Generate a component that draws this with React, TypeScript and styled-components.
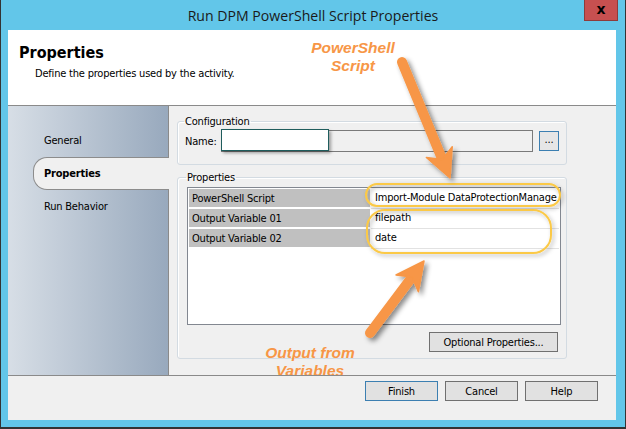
import React from "react";
import styled, { createGlobalStyle } from "styled-components";

const UI = `"DejaVu Sans Condensed", "DejaVu Sans", sans-serif`;
const ORANGE = "#f79646";

const Global = createGlobalStyle`
  html, body { margin: 0; padding: 0; background: #ffffff; }
  * { box-sizing: border-box; }
`;

const Window = styled.div`
  width: 626px;
  height: 429px;
  background: #62c6e9;
  border-left: 1px solid #333;
  border-right: 1px solid #333;
  border-bottom: 2px solid #333;
  display: flex;
  flex-direction: column;
  font-family: ${UI};
  font-size: 11px;
  letter-spacing: -0.2px;
  color: #000;
`;

const TitleBar = styled.div`
  height: 30px;
  flex: none;
  display: grid;
  grid-template-columns: 1fr auto 1fr;
  align-items: center;
`;

const Title = styled.div`
  grid-column: 2;
  font-family: "Open Sans", "Noto Sans", sans-serif;
  font-size: 14.1px;
  letter-spacing: 0;
  color: #1a1a1a;
  white-space: nowrap;
`;

const CloseButton = styled.div`
  grid-column: 3;
  justify-self: end;
  align-self: start;
  margin-right: 7px;
  width: 34px;
  height: 21px;
  background: #c75050;
  border: 1px solid #8e3b3b;
  border-top: none;
  display: flex;
  align-items: center;
  justify-content: center;
  font-family: "DejaVu Sans", sans-serif;
  font-weight: bold;
  font-size: 14px;
  letter-spacing: 0;
  color: #000;
  line-height: 1;
  padding-bottom: 2px;
`;

const Client = styled.div`
  position: relative;
  flex: 1;
  margin: 0 9px 7px 7px;
  display: flex;
  flex-direction: column;
  background: #f0f0f0;
  overflow: hidden;
`;

const Header = styled.div`
  height: 76px;
  flex: none;
  background: #fff;
  border-bottom: 1px solid #8a8a8a;
  padding: 13px 0 0 11px;
`;

const Heading = styled.div`
  font-weight: bold;
  font-size: 16px;
  letter-spacing: 0;
  line-height: 20px;
`;

const SubHeading = styled.div`
  margin: 4px 0 0 16px;
  line-height: 14px;
`;

const Body = styled.div`
  flex: 1;
  display: flex;
  min-height: 0;
`;

const Sidebar = styled.div`
  width: 161px;
  flex: none;
  background: linear-gradient(to right, #d7dee6, #98a9bd);
  border-right: 1px solid #8a8a8a;
  padding-top: 18px;
  display: flex;
  flex-direction: column;
`;

const Tab = styled.div<{ $active?: boolean }>`
  height: 33px;
  margin-left: 25px;
  margin-right: -1px;
  padding-left: 10px;
  display: flex;
  align-items: center;
  font-weight: ${(p) => (p.$active ? "bold" : "normal")};
  background: ${(p) => (p.$active ? "#f0f0f0" : "transparent")};
  border: 1px solid ${(p) => (p.$active ? "#8c8c8c" : "transparent")};
  border-right: none;
  border-radius: 14px 0 0 14px;
`;

const Panel = styled.div`
  flex: 1;
  padding: 9px 0 0 8px;
  display: flex;
  flex-direction: column;
  gap: 6px;
`;

const Group = styled.fieldset<{ $pl: number; $pr: number; $pb: number }>`
  width: 390px;
  margin: 0;
  padding: 0 ${(p) => p.$pr}px ${(p) => p.$pb}px ${(p) => p.$pl}px;
  border: 1px solid #d3dbe2;
  border-radius: 3px;
  box-shadow: inset 1px 1px 0 #fff;
`;

const Legend = styled.legend`
  padding: 0 1px;
  line-height: 13px;
  margin-left: -1px;
`;

const NameRow = styled.div`
  display: flex;
  align-items: center;
  margin-top: 2px;
`;

const NameLabel = styled.div`
  width: 36px;
`;

const FieldWrap = styled.div`
  position: relative;
  width: 312px;
  height: 22px;
`;

const Field = styled.div`
  width: 100%;
  height: 100%;
  border: 1px solid #7a7a7a;
  background: #f0f0f0;
`;

const FieldHighlight = styled.div`
  position: absolute;
  left: 0;
  top: -1px;
  width: 108px;
  height: 22px;
  background: #fff;
  border: 1px solid #1f5d5d;
  box-shadow: 2px 2px 3px rgba(0, 0, 0, 0.35);
`;

const DotsButton = styled.div`
  width: 20px;
  height: 20px;
  margin-left: 6px;
  border: 1px solid #3c7fb1;
  background: #e6e6e6;
  display: flex;
  align-items: center;
  justify-content: center;
  padding-bottom: 3px;
`;

const Grid = styled.div`
  margin-top: 3px;
  width: 374px;
  height: 138px;
  border: 1px solid #828790;
  background: #fff;
  padding: 1px;
  display: flex;
  flex-direction: column;
`;

const Row = styled.div`
  display: grid;
  grid-template-columns: 182px 1fr;
  height: 20px;
`;

const KeyCell = styled.div`
  background: #c0c0c0;
  height: 18px;
  padding-left: 3px;
  display: flex;
  align-items: center;
  margin-right: 1px;
`;

const ValueCell = styled.div`
  height: 20px;
  padding: 0 0 2px 4px;
  border-bottom: 1px solid #e2e2e2;
  display: flex;
  align-items: center;
  white-space: nowrap;
  overflow: hidden;
`;

const ButtonRow = styled.div<{ $mt: number; $mr: number }>`
  display: flex;
  justify-content: flex-end;
  gap: 7px;
  margin-top: ${(p) => p.$mt}px;
  margin-right: ${(p) => p.$mr}px;
`;

const Button = styled.div<{ $w: number; $default?: boolean }>`
  width: ${(p) => p.$w}px;
  height: 20px;
  border: 1px solid ${(p) => (p.$default ? "#3c7fb1" : "#707070")};
  background: #e1e1e1;
  display: flex;
  align-items: center;
  justify-content: center;
  white-space: nowrap;
`;

const Footer = styled.div`
  position: relative;
  z-index: 2;
  height: 45px;
  flex: none;
  background: #f0f0f0;
  border-top: 1px solid #8a8a8a;
  padding: 5px 18px 0 0;
`;

const Overlay = styled.div`
  position: absolute;
  inset: 0;
  z-index: 1;
  pointer-events: none;
`;

const Note = styled.div<{ $x: number; $y: number }>`
  position: absolute;
  left: ${(p) => p.$x}px;
  top: ${(p) => p.$y}px;
  width: 140px;
  text-align: center;
  font-family: "Liberation Sans", Arial, sans-serif;
  font-weight: bold;
  font-style: italic;
  font-size: 15.5px;
  letter-spacing: 0;
  line-height: 18px;
  color: ${ORANGE};
`;

const Drawing = styled.svg`
  position: absolute;
  left: 0;
  top: 0;
  width: 608px;
  height: 390px;
`;

const Arrow: React.FC<{ tail: [number, number]; tip: [number, number] }> = ({ tail, tip }) => {
  const dx = tip[0] - tail[0];
  const dy = tip[1] - tail[1];
  const len = Math.hypot(dx, dy);
  const d = [dx / len, dy / len];
  const n = [d[1], -d[0]];
  const hl = 28;
  const hw = 14;
  const B = [tip[0] - hl * d[0], tip[1] - hl * d[1]];
  const N = [tip[0] - 20 * d[0], tip[1] - 20 * d[1]];
  const w1 = [B[0] + hw * n[0], B[1] + hw * n[1]];
  const w2 = [B[0] - hw * n[0], B[1] - hw * n[1]];
  const pts = [tip, w1, N, w2].map((p) => p.join(",")).join(" ");
  return (
    <g filter="url(#shadow)">
      <line x1={tail[0]} y1={tail[1]} x2={N[0] + 2 * d[0]} y2={N[1] + 2 * d[1]} stroke={ORANGE} strokeWidth={10} strokeLinecap="round" />
      <polygon points={pts} fill={ORANGE} stroke={ORANGE} strokeWidth={1.5} strokeLinejoin="round" />
    </g>
  );
};

const rows = [
  ["PowerShell Script", "Import-Module DataProtectionManage"],
  ["Output Variable 01", "filepath"],
  ["Output Variable 02", "date"],
];

export default function App() {
  return (
    <>
      <Global />
      <Window>
        <TitleBar>
          <Title>Run DPM PowerShell Script Properties</Title>
          <CloseButton>x</CloseButton>
        </TitleBar>
        <Client>
          <Header>
            <Heading>Properties</Heading>
            <SubHeading>Define the properties used by the activity.</SubHeading>
          </Header>
          <Body>
            <Sidebar>
              <Tab>General</Tab>
              <Tab $active>Properties</Tab>
              <Tab>Run Behavior</Tab>
            </Sidebar>
            <Panel>
              <Group $pl={7} $pr={7} $pb={12}>
                <Legend>Configuration</Legend>
                <NameRow>
                  <NameLabel>Name:</NameLabel>
                  <FieldWrap>
                    <Field />
                    <FieldHighlight />
                  </FieldWrap>
                  <DotsButton>...</DotsButton>
                </NameRow>
              </Group>
              <Group $pl={9} $pr={5} $pb={6}>
                <Legend>Properties</Legend>
                <Grid>
                  {rows.map(([k, v]) => (
                    <Row key={k}>
                      <KeyCell>{k}</KeyCell>
                      <ValueCell>{v}</ValueCell>
                    </Row>
                  ))}
                </Grid>
                <ButtonRow $mt={7} $mr={3}>
                  <Button $w={129}>Optional Properties...</Button>
                </ButtonRow>
              </Group>
            </Panel>
          </Body>
          <Footer>
            <ButtonRow $mt={0} $mr={0}>
              <Button $w={73} $default>Finish</Button>
              <Button $w={73}>Cancel</Button>
              <Button $w={73}>Help</Button>
            </ButtonRow>
          </Footer>
          <Overlay>
            <Drawing viewBox="8 30 608 390">
              <defs>
                <filter id="shadow" x="-50%" y="-50%" width="200%" height="200%">
                  <feDropShadow dx="3" dy="3" stdDeviation="2.5" floodColor="#000" floodOpacity="0.45" />
                </filter>
                <filter id="glow" x="-20%" y="-50%" width="140%" height="200%">
                  <feDropShadow dx="2" dy="2" stdDeviation="2" floodColor="#000" floodOpacity="0.3" />
                </filter>
              </defs>
              <rect x={366} y={184} width={194} height={22} rx={11} fill="none" stroke="#fbc947" strokeWidth={2} filter="url(#glow)" />
              <rect x={367} y={210} width={184} height={43} rx={18} fill="none" stroke="#fbc947" strokeWidth={2} filter="url(#glow)" />
              <Arrow tail={[402, 62]} tip={[450, 178]} />
              <Arrow tail={[370, 333]} tip={[424, 261]} />
            </Drawing>
            <Note $x={275} $y={9}>PowerShell<br />Script</Note>
            <Note $x={232} $y={314}>Output from<br />Variables</Note>
          </Overlay>
        </Client>
      </Window>
    </>
  );
}
